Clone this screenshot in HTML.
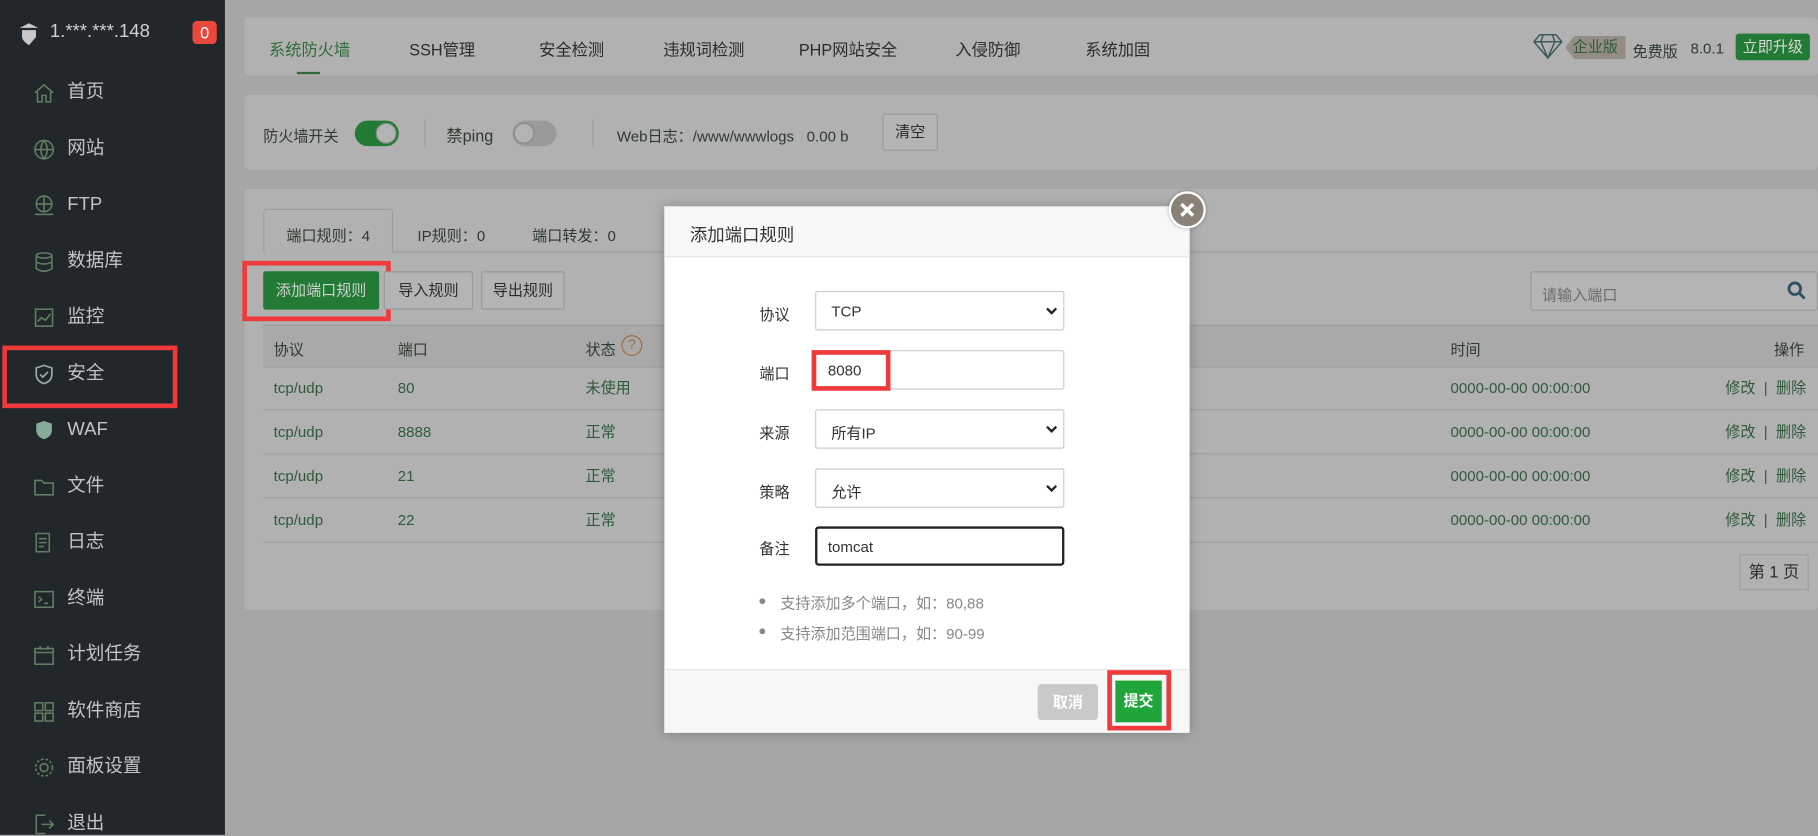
<!DOCTYPE html>
<html><head><meta charset="utf-8"><style>
*{margin:0;padding:0;box-sizing:border-box}
html,body{width:1818px;height:835px;overflow:hidden;background:#a6a6a6}
#w{position:absolute;left:0;top:0;width:1568px;height:720px;transform:scale(1.15944);transform-origin:0 0;font-family:"Liberation Sans","Noto Sans CJK SC",sans-serif;font-size:13px;color:#2d3a30}
.a{position:absolute}
.side{left:0;top:0;width:194px;height:720px;background:#22272b}
.mi{position:absolute;left:58px;font-size:16px;line-height:20px;color:#c2c5c7}
.ic{position:absolute;left:29px;width:18px;height:18px}
.card{background:#b1b1b1;border-radius:3px}
.tab{position:absolute;top:33px;font-size:14px;color:#2b2b2b}
.tog{position:absolute;width:38px;height:22px;border-radius:11px}
.knob{position:absolute;top:2px;width:18px;height:18px;border-radius:50%;background:#b3b3b3;border:1px solid #888}
.btn{position:absolute;border:1px solid #999;border-radius:2px;background:#b4b4b4;font-size:13px;text-align:center;color:#2b2b2b}
.rb{position:absolute;border:4px solid #f0393b}
.row{position:absolute;left:227px;width:1341px;height:38px;border-bottom:1px solid #9d9d9d}
.row span{position:absolute;top:10px;line-height:18px;color:#2f5a3a}
.md{left:573px;top:178px;width:453px;height:454px;background:#fff;box-shadow:0 0 10px rgba(0,0,0,.25)}
.lb{position:absolute;left:82px;font-size:13px;color:#333}
.in{position:absolute;left:130px;width:215px;height:34px;border:1px solid #ccc;border-radius:2px;background:#fff;font-size:13px;color:#333;padding:9px 0 0 13px}
.chev{position:absolute;right:4px;top:10px;width:12px;height:12px}
</style></head><body><div id="w">
<div class="a side">
 <svg class="a" style="left:16px;top:19px" width="18" height="20" viewBox="0 0 18 20"><path d="M9 1 L17 5 L1 5 Z" fill="#c8c8c8"/><path d="M3 7 H15 V13 Q9 20 9 20 Q3 16 3 13 Z" fill="#c8c8c8"/></svg>
 <div class="a" style="left:43px;top:19px;font-size:16px;color:#d0d0d0">1.***.***.148</div>
 <div class="a" style="left:166px;top:18px;width:21px;height:20px;background:#e8473c;border-radius:4px;color:#fff;font-size:14px;text-align:center;line-height:20px">0</div>
 <svg class="ic" style="top:71px" viewBox="0 0 16 16" fill="none" stroke="#5f7f62" stroke-width="1.2"><path d="M1 8 L8 2 L15 8 M3 7 V15 H6.5 V10 H9.5 V15 H13 V7"/></svg><div class="mi" style="top:70px">首页</div>
 <svg class="ic" style="top:120px" viewBox="0 0 16 16" fill="none" stroke="#5f7f62" stroke-width="1.2"><circle cx="8" cy="8" r="7"/><path d="M1 8 H15 M8 1 Q3 8 8 15 Q13 8 8 1"/></svg><div class="mi" style="top:119px">网站</div>
 <svg class="ic" style="top:168px" viewBox="0 0 16 16" fill="none" stroke="#5f7f62" stroke-width="1.2"><circle cx="8" cy="7" r="6"/><path d="M2 7 H14 M8 1 V13 M1 15 H15"/></svg><div class="mi" style="top:167px">FTP</div>
 <svg class="ic" style="top:217px" viewBox="0 0 16 16" fill="none" stroke="#5f7f62" stroke-width="1.2"><ellipse cx="8" cy="3" rx="6" ry="2"/><path d="M2 3 V13 Q8 17 14 13 V3 M2 8 Q8 11 14 8"/></svg><div class="mi" style="top:216px">数据库</div>
 <svg class="ic" style="top:265px" viewBox="0 0 16 16" fill="none" stroke="#5f7f62" stroke-width="1.2"><rect x="1.5" y="1.5" width="13" height="13"/><path d="M3 11 L6 8 L9 10 L13 5"/></svg><div class="mi" style="top:264px">监控</div>
 <svg class="ic" style="top:314px" viewBox="0 0 16 16" fill="none" stroke="#9aa" stroke-width="1.3"><path d="M8 1 L14 3 V8 Q14 13 8 15 Q2 13 2 8 V3 Z M5 8 L7 10 L11 6"/></svg><div class="mi" style="top:313px">安全</div>
 <svg class="ic" style="top:362px" viewBox="0 0 16 16"><path d="M8 1 L14 3 V8 Q14 13 8 15 Q2 13 2 8 V3 Z" fill="#8a9"/></svg><div class="mi" style="top:361px">WAF</div>
 <svg class="ic" style="top:411px" viewBox="0 0 16 16" fill="none" stroke="#5f7f62" stroke-width="1.2"><path d="M1 3 H6 L8 5 H15 V14 H1 Z"/></svg><div class="mi" style="top:410px">文件</div>
 <svg class="ic" style="top:459px" viewBox="0 0 16 16" fill="none" stroke="#5f7f62" stroke-width="1.2"><path d="M2 1 H12 V15 H2 Z M4 5 H10 M4 8 H10 M4 11 H8"/></svg><div class="mi" style="top:458px">日志</div>
 <svg class="ic" style="top:508px" viewBox="0 0 16 16" fill="none" stroke="#5f7f62" stroke-width="1.2"><rect x="1" y="2" width="14" height="12"/><path d="M4 6 L6 8 L4 10 M8 11 H11"/></svg><div class="mi" style="top:507px">终端</div>
 <svg class="ic" style="top:556px" viewBox="0 0 16 16" fill="none" stroke="#5f7f62" stroke-width="1.2"><rect x="1" y="3" width="14" height="12"/><path d="M1 6 H15 M5 1 V4 M11 1 V4"/></svg><div class="mi" style="top:555px">计划任务</div>
 <svg class="ic" style="top:605px" viewBox="0 0 16 16" fill="none" stroke="#5f7f62" stroke-width="1.2"><rect x="1" y="1" width="6" height="6"/><rect x="9" y="1" width="6" height="6"/><rect x="1" y="9" width="6" height="6"/><rect x="9" y="9" width="6" height="6"/></svg><div class="mi" style="top:604px">软件商店</div>
 <svg class="ic" style="top:653px" viewBox="0 0 16 16" fill="none" stroke="#5f7f62" stroke-width="1.2"><circle cx="8" cy="8" r="3"/><circle cx="8" cy="8" r="6.5" stroke-dasharray="2 1.5"/></svg><div class="mi" style="top:652px">面板设置</div>
 <svg class="ic" style="top:702px" viewBox="0 0 16 16" fill="none" stroke="#5f7f62" stroke-width="1.2"><path d="M9 1 H2 V15 H9 M6 8 H15 M12 5 L15 8 L12 11"/></svg><div class="mi" style="top:701px">退出</div>
</div>
<div class="rb" style="left:2px;top:298px;width:151px;height:54px"></div>

<div class="a card" style="left:211px;top:15px;width:1357px;height:50px"></div>
<div class="tab" style="left:232px;color:#2f6b3a">系统防火墙</div>
<div class="a" style="left:256px;top:62px;width:20px;height:2px;background:#2f6b3a"></div>
<div class="tab" style="left:353px">SSH管理</div>
<div class="tab" style="left:465px">安全检测</div>
<div class="tab" style="left:572px">违规词检测</div>
<div class="tab" style="left:689px">PHP网站安全</div>
<div class="tab" style="left:824px">入侵防御</div>
<div class="tab" style="left:936px">系统加固</div>
<svg class="a" style="left:1322px;top:29px" width="26" height="22" viewBox="0 0 26 22" fill="none" stroke="#3c5a5a" stroke-width="1.3"><path d="M6 1 H20 L25 7 L13 21 L1 7 Z M1 7 H25 M9 1 L7 7 L13 21 L19 7 L17 1"/></svg>
<div class="a" style="left:1350px;top:31px;width:52px;height:20px;background:#948d85;color:#2f5a3a;font-size:13px;text-align:center;line-height:20px;clip-path:polygon(8px 0,100% 0,100% 100%,8px 100%,0 50%)">企业版</div>
<div class="a" style="left:1408px;top:34px;font-size:13px;color:#2d3a3a">免费版</div>
<div class="a" style="left:1458px;top:34px;font-size:13px;color:#2d3a3a">8.0.1</div>
<div class="a" style="left:1497px;top:29px;width:64px;height:23px;background:#227a34;border-radius:3px;color:#d8d8d8;font-size:13px;text-align:center;line-height:23px">立即升级</div>

<div class="a card" style="left:211px;top:82px;width:1357px;height:64px"></div>
<div class="a" style="left:227px;top:107px;font-size:13px">防火墙开关</div>
<div class="tog" style="left:306px;top:104px;background:#227a34"><div class="knob" style="left:18px"></div></div>
<div class="a" style="left:366px;top:103px;width:1px;height:24px;background:#999"></div>
<div class="a" style="left:385px;top:107px;font-size:14px">禁ping</div>
<div class="tog" style="left:442px;top:104px;background:#9a9a9a"><div class="knob" style="left:1px"></div></div>
<div class="a" style="left:511px;top:103px;width:1px;height:24px;background:#999"></div>
<div class="a" style="left:532px;top:107px;font-size:13px">Web日志：/www/wwwlogs &nbsp;&nbsp;0.00 b</div>
<div class="btn" style="left:761px;top:98px;width:48px;height:32px;line-height:30px">清空</div>

<div class="a card" style="left:211px;top:163px;width:1357px;height:363px"></div>
<div class="a" style="left:227px;top:217px;width:1341px;height:1px;background:#9a9a9a"></div>
<div class="a" style="left:227px;top:180px;width:112px;height:38px;border:1px solid #9a9a9a;border-bottom:none;background:#b1b1b1;border-radius:3px 3px 0 0"></div>
<div class="a" style="left:247px;top:193px">端口规则：4</div>
<div class="a" style="left:360px;top:193px">IP规则：0</div>
<div class="a" style="left:459px;top:193px">端口转发：0</div>
<div class="a" style="left:227px;top:234px;width:100px;height:33px;background:#227a34;border-radius:2px;color:#d0d0d0;text-align:center;line-height:33px">添加端口规则</div>
<div class="rb" style="left:209px;top:225px;width:128px;height:52px"></div>
<div class="btn" style="left:331px;top:234px;width:77px;height:33px;line-height:31px">导入规则</div>
<div class="btn" style="left:415px;top:234px;width:72px;height:33px;line-height:31px">导出规则</div>
<div class="a" style="left:1320px;top:234px;width:248px;height:34px;border:1px solid #999;border-radius:2px;background:#b4b4b4"></div>
<div class="a" style="left:1330px;top:244px;color:#6c6c6c">请输入端口</div>
<svg class="a" style="left:1541px;top:242px" width="17" height="17" viewBox="0 0 17 17" fill="none" stroke="#2c5060" stroke-width="2.4"><circle cx="7" cy="7" r="5"/><path d="M10.5 10.5 L15.5 15.5"/></svg>
<div class="a" style="left:227px;top:280px;width:1341px;height:37px;background:#a9a9a9;border-top:1px solid #9d9d9d;border-bottom:1px solid #9d9d9d"></div>
<div class="a" style="left:236px;top:291px">协议</div>
<div class="a" style="left:343px;top:291px">端口</div>
<div class="a" style="left:505px;top:291px">状态</div>
<div class="a" style="left:536px;top:289px;width:18px;height:18px;border:1.5px solid #a06a3a;border-radius:50%;color:#a06a3a;font-size:12px;text-align:center;line-height:15px">?</div>
<div class="a" style="left:1251px;top:291px">时间</div>
<div class="a" style="left:1530px;top:291px">操作</div>
<div class="row" style="top:316px"><span style="left:9px">tcp/udp</span><span style="left:116px">80</span><span style="left:278px">未使用</span><span style="left:1024px">0000-00-00 00:00:00</span><span style="left:1261px">修改 &nbsp;| &nbsp;删除</span></div>
<div class="row" style="top:354px"><span style="left:9px">tcp/udp</span><span style="left:116px">8888</span><span style="left:278px">正常</span><span style="left:1024px">0000-00-00 00:00:00</span><span style="left:1261px">修改 &nbsp;| &nbsp;删除</span></div>
<div class="row" style="top:392px"><span style="left:9px">tcp/udp</span><span style="left:116px">21</span><span style="left:278px">正常</span><span style="left:1024px">0000-00-00 00:00:00</span><span style="left:1261px">修改 &nbsp;| &nbsp;删除</span></div>
<div class="row" style="top:430px"><span style="left:9px">tcp/udp</span><span style="left:116px">22</span><span style="left:278px">正常</span><span style="left:1024px">0000-00-00 00:00:00</span><span style="left:1261px">修改 &nbsp;| &nbsp;删除</span></div>
<div class="a" style="left:1500px;top:478px;width:60px;height:31px;border:1px solid #9d9d9d;text-align:center;line-height:29px;font-size:14px;color:#2b2b2b">第 1 页</div>

<div class="a md">
 <div class="a" style="left:0;top:0;width:453px;height:44px;background:#f6f8f8;border-bottom:1px solid #e6e6e6"></div>
 <div class="a" style="left:22px;top:14px;font-size:15px;color:#333">添加端口规则</div>
 <div class="lb" style="top:83px">协议</div>
 <div class="in" style="top:73px">TCP<svg class="chev" viewBox="0 0 12 12" fill="none" stroke="#222" stroke-width="2"><path d="M2 4 L6 8 L10 4"/></svg></div>
 <div class="lb" style="top:134px">端口</div>
 <div class="in" style="top:124px;padding-left:10px">8080</div>
 <div class="lb" style="top:185px">来源</div>
 <div class="in" style="top:175px">所有IP<svg class="chev" viewBox="0 0 12 12" fill="none" stroke="#222" stroke-width="2"><path d="M2 4 L6 8 L10 4"/></svg></div>
 <div class="lb" style="top:236px">策略</div>
 <div class="in" style="top:226px">允许<svg class="chev" viewBox="0 0 12 12" fill="none" stroke="#222" stroke-width="2"><path d="M2 4 L6 8 L10 4"/></svg></div>
 <div class="lb" style="top:285px">备注</div>
 <div class="in" style="top:276px;height:34px;border:2px solid #222;border-radius:3px;padding-left:9px;padding-top:8px">tomcat</div>
 <div class="a" style="left:82px;top:338px;width:5px;height:5px;border-radius:50%;background:#888"></div>
 <div class="a" style="left:100px;top:332px;color:#888">支持添加多个端口，如：80,88</div>
 <div class="a" style="left:82px;top:364px;width:5px;height:5px;border-radius:50%;background:#888"></div>
 <div class="a" style="left:100px;top:358px;color:#888">支持添加范围端口，如：90-99</div>
 <div class="a" style="left:0;top:399px;width:453px;height:55px;background:#f6f8f8;border-top:1px solid #e6e6e6"></div>
 <div class="a" style="left:322px;top:412px;width:52px;height:31px;background:#c9c9c9;border-radius:3px;color:#fff;font-weight:bold;text-align:center;line-height:31px">取消</div>
 <div class="a" style="left:389px;top:409px;width:40px;height:36px;background:#20a53a;color:#fff;font-weight:bold;text-align:center;line-height:36px">提交</div>
</div>
<div class="rb" style="left:700px;top:302px;width:68px;height:35px"></div>
<div class="rb" style="left:955px;top:578px;width:55px;height:52px"></div>
<div class="a" style="left:1008px;top:165px;width:32px;height:32px;border-radius:50%;background:#8a8178;border:2px solid #fff;box-shadow:0 0 3px rgba(0,0,0,.3)"><svg width="28" height="28" viewBox="0 0 28 28" stroke="#fff" stroke-width="3"><path d="M9 9 L19 19 M19 9 L9 19"/></svg></div>
</div></body></html>
